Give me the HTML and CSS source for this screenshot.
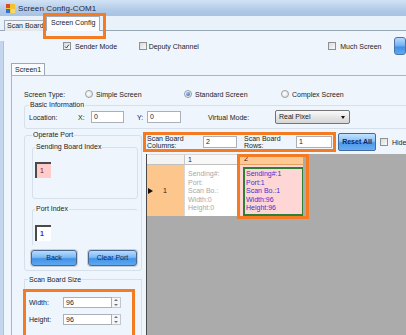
FILE: index.html
```html
<!DOCTYPE html>
<html>
<head>
<meta charset="utf-8">
<link rel="stylesheet" href="styles.css">
</head>
<body>
<div class="window">
  <div class="titlebar">
    <svg class="appicon" width="9" height="9" viewBox="0 0 9 9">
      <rect x="0" y="0" width="9" height="9" fill="#f2c230"/>
      <rect x="0" y="0" width="4" height="4" fill="#e0482c"/>
      <rect x="0" y="5" width="4" height="4" fill="#2f74d0"/>
      <rect x="5" y="5" width="4" height="4" fill="#f6d86a"/>
    </svg>
    <span class="title">Screen Config-COM1</span>
  </div>

  <div class="tabstrip">
    <div class="tab">Scan Board</div>
    <div class="tab active">Screen Config<span class="mark mark-tab"></span></div>
  </div>

  <div class="client">
    <div class="client-in">
      <div class="opts">
        <span class="chk-item w1"><span class="chk"><svg width="8" height="8" viewBox="0 0 8 8"><path d="M1.5 4 L3.2 6 L6.5 1.5" fill="none" stroke="#253f86" stroke-width="1.3"/></svg></span>Sender Mode</span>
        <span class="chk-item w2"><span class="chk"></span>Deputy Channel</span>
        <span class="chk-item w3"><span class="chk"></span>Much Screen</span>
        <span class="cutbtn"></span>
      </div>

      <div class="subtabs"><div class="subtab">Screen1</div></div>

      <div class="panel">
        <div class="stype">
          <span class="lbl l-stype">Screen Type:</span>
          <span class="radio-item r1"><span class="radio"></span>Simple Screen</span>
          <span class="radio-item r2"><span class="radio on"></span>Standard Screen</span>
          <span class="radio-item"><span class="radio"></span>Complex Screen</span>
        </div>

        <fieldset class="grp basic">
          <legend>Basic Information</legend>
          <div class="locrow">
            <span class="lbl l-loc">Location:</span>
            <span class="lbl l-x">X:</span>
            <span class="inp i-x">0</span>
            <span class="lbl l-y">Y:</span>
            <span class="inp i-y">0</span>
            <span class="lbl l-vm">Virtual Mode:</span>
            <span class="select">Real Pixel<span class="dd"></span></span>
          </div>
        </fieldset>

        <div class="lower">
          <div class="leftcol">
            <fieldset class="grp operate">
              <legend>Operate Port</legend>
              <fieldset class="grp sending">
                <legend>Sending Board Index</legend>
                <div class="idx pink">1</div>
              </fieldset>
              <fieldset class="grp port">
                <legend>Port Index</legend>
                <div class="idx white">1</div>
              </fieldset>
              <div class="btns">
                <span class="btn b-back">Back</span>
                <span class="btn b-clear">Clear Port</span>
              </div>
            </fieldset>

            <div class="sizegrp">
              <div class="sizelegend"><span>Scan Board Size</span></div>
              <div class="whbox">
                <div class="whrow">
                  <span class="lbl l-wh">Width:</span>
                  <span class="inp i-wh">96</span>
                  <span class="spin"><span class="up"></span><span class="down"></span></span>
                </div>
                <div class="whrow r-h">
                  <span class="lbl l-wh">Height:</span>
                  <span class="inp i-wh">96</span>
                  <span class="spin"><span class="up"></span><span class="down"></span></span>
                </div>
              </div>
            </div>
          </div>

          <div class="rightcol">
            <div class="colsrow">
              <div class="colsbox">
                <span class="lbl2 l-c">Scan Board<br>Columns:</span>
                <span class="inp i-c">2</span>
                <span class="lbl2 l-r">Scan Board<br>Rows:</span>
                <span class="inp i-r">1</span>
              </div>
              <span class="rbtn">Reset All</span>
              <span class="chk-item hide"><span class="chk"></span>Hide</span>
            </div>

            <div class="grid">
              <div class="ghead">
                <div class="gc corner"></div>
                <div class="gc h1">1</div>
                <div class="gc h2">2</div>
              </div>
              <div class="grow">
                <div class="gc rh"><span class="arrow"></span><span class="rnum">1</span></div>
                <div class="gc c1">Sending#:<br>Port:<br>Scan Bo.:<br>Width:0<br>Height:0</div>
                <div class="gc c2"><div class="sel">Sending#:1<br>Port:1<br>Scan Bo.:1<br>Width:96<br>Height:96</div></div>
              </div>
              <span class="mark mark-col"></span>
            </div>
          </div>
        </div>
      </div>
    </div>
  </div>
</div>
</body>
</html>
```

FILE: styles.css
```css
* { box-sizing: border-box; }
html, body { margin: 0; padding: 0; }
body { width: 406px; height: 335px; overflow: hidden; background: #eef5fc; }

.window {
  position: relative;
  width: 406px;
  height: 335px;
  overflow: hidden;
  background: #eef5fc;
  font-family: "Liberation Sans", Arial, sans-serif;
  font-size: 7px;
  line-height: 9px;
  color: #1c1c1c;
}

/* title bar */
.titlebar {
  height: 16px;
  display: flex;
  align-items: center;
  padding-left: 6px;
  gap: 3px;
  background: linear-gradient(#d3e3f5, #b2cbe8 60%, #a7c2e3);
}
.appicon { display: block; }
.title { font-size: 8px; color: #1f2b3c; letter-spacing: 0.1px; }

/* top tabs */
.tabstrip {
  height: 15px;
  display: flex;
  align-items: flex-end;
  padding-left: 4px;
  background: #e9f1fa;
  border-bottom: 1px solid #98a6b6;
}
.tab {
  position: relative;
  height: 11px;
  width: 42px;
  margin-bottom: -1px;
  padding-left: 2px;
  border: 1px solid #a3adb9;
  border-bottom: none;
  background: linear-gradient(#f6f6f6, #e3e6ea);
  font-size: 7px;
  line-height: 10px;
  white-space: nowrap;
  overflow: hidden;
}
.tab.active {
  height: 15px;
  width: 54px;
  overflow: visible;
  padding-left: 4px;
  line-height: 12px;
  background: #fbfdff;
  z-index: 2;
}

/* orange annotation marks */
.mark {
  position: absolute;
  border: 3px solid #f47b22;
  pointer-events: none;
}
.mark-tab { left: -4px; top: -4px; width: 63px; height: 26px; }

/* client area */
.client {
  height: 304px;
  border-left: 3px solid #c3d6ed;
}
.client-in {
  height: 100%;
  border-left: 1px solid #b3c2d3;
}

.opts {
  display: flex;
  align-items: center;
  height: 10px;
  margin-top: 10px;
  padding-left: 59px;
}
.chk-item { display: flex; align-items: center; white-space: nowrap; }
.chk-item.w1 { width: 77px; }
.chk-item.w2 { width: 193px; }
.chk-item.w3 { width: 67px; }
.chk {
  width: 8px;
  height: 8px;
  margin-right: 4px;
  border: 1px solid #8e9092;
  background: linear-gradient(135deg, #d9dadc, #fafafa);
  display: flex;
  align-items: center;
  justify-content: center;
}
.chk svg { display: block; width: 7px; height: 7px; }
.w1 .chk { margin-right: 4px; }
.w2 .chk { margin-right: 2px; }
.cutbtn {
  width: 12px;
  height: 18px;
  flex: none;
  border: 1px solid #4b73a8;
  border-radius: 3px;
  background: linear-gradient(#b7dafc, #6fb0f2 50%, #3f8fe6 55%, #62aaf0);
}

.subtabs { height: 12px; margin-top: 12px; padding-left: 7px; }
.subtab {
  width: 34px;
  height: 12px;
  border: 1px solid #9ea9b6;
  border-bottom: none;
  background: #f9fbfe;
  padding-left: 3px;
  line-height: 11px;
  font-size: 7px;
}

.panel {
  margin-left: 7px;
  height: 280px;
  border-left: 1px solid #a9b6c5;
  border-top: 1px solid #a9b6c5;
  padding: 12px 0 0 12px;
}

.stype { display: flex; align-items: center; height: 12px; }
.l-stype { width: 61px; }
.radio-item { display: flex; align-items: center; white-space: nowrap; }
.radio-item.r1 { width: 99px; }
.radio-item.r2 { width: 97px; }
.radio {
  width: 8px;
  height: 8px;
  border-radius: 50%;
  border: 1px solid #9b9ea2;
  background: radial-gradient(circle at 40% 40%, #ffffff, #d8dadc);
  margin-right: 4px;
  display: flex;
  align-items: center;
  justify-content: center;
}
.radio.on::after {
  content: "";
  width: 4px;
  height: 4px;
  border-radius: 50%;
  background: radial-gradient(circle at 35% 35%, #9cc6f0, #1f5aa8);
}
.radio-item .radio { margin-right: 3px; }

/* group boxes */
fieldset.grp {
  margin: 0;
  min-width: 0;
  border: 1px solid #d6e0ea;
  border-radius: 3px;
  padding: 0;
}
fieldset.grp > legend {
  padding: 0 1px;
  margin-left: 0;
  font-size: 7px;
  line-height: 10px;
  color: #1c1c1c;
}

.basic {
  width: 420px;
  margin-top: 4px;
  padding: 0 0 4px 4px !important;
}
.locrow { display: flex; align-items: center; height: 14px; }
.lbl { white-space: nowrap; }
.l-loc { width: 49px; }
.l-x { width: 13px; }
.l-y { width: 10px; margin-left: 13px; }
.l-vm { width: 67px; margin-left: 27px; }
.inp {
  display: block;
  height: 12px;
  border: 1px solid #a9b0b8;
  background: #ffffff;
  padding-left: 2px;
  line-height: 10px;
  font-size: 7px;
}
.i-x { width: 33px; }
.i-y { width: 34px; }
.select {
  position: relative;
  width: 75px;
  height: 14px;
  border: 1px solid #747474;
  border-radius: 2px;
  background: linear-gradient(#fafafa, #e4e4e4 55%, #d6d6d6);
  padding-left: 3px;
  line-height: 12px;
}
.dd {
  position: absolute;
  right: 4px;
  top: 5px;
  border-left: 2.5px solid transparent;
  border-right: 2.5px solid transparent;
  border-top: 3px solid #111;
}

/* lower area */
.lower { display: flex; margin-top: 1px; }
.leftcol { width: 118px; flex: none; }

.operate { padding: 0 3px 4px 7px !important; }
.sending { margin-top: 2px !important; padding: 0 0 20px 2px !important; }
.port { margin-top: 5px !important; padding: 0 0 4px 2px !important; border-bottom-color: transparent !important; border-right-color: transparent !important; }
.idx {
  width: 16px;
  height: 16px;
  border-top: 2px solid #4a4a4a;
  border-left: 2px solid #4a4a4a;
  padding-left: 3px;
  line-height: 13px;
  font-size: 7px;
}
.idx.pink { margin-top: 10px; background: #ffcccc; color: #7a1010; }
.idx.white { margin-top: 11px; background: #ffffff; color: #1b2fd0; font-weight: bold; }

.btns { display: flex; gap: 11px; margin-top: 4px; margin-left: -1px; }
.btn {
  height: 16px;
  border: 1px solid #4c6890;
  border-radius: 3px;
  background: linear-gradient(#b9dcfd, #7cb9f4 45%, #4393e7 55%, #5ea8f0);
  box-shadow: 0 0 0 1px #c6ced8;
  color: #0e2a62;
  text-align: center;
  line-height: 14px;
  font-size: 7px;
}
.b-back { width: 46px; }
.b-clear { width: 49px; }

/* scan board size group (open at the bottom edge) */
.sizegrp {
  margin-top: 8px;
  height: 70px;
  border-left: 1px solid #d6e0ea;
  border-right: 1px solid #d6e0ea;
  border-radius: 3px 3px 0 0;
}
.sizegrp .sizelegend {
  height: 0;
  border-top: 1px solid #d6e0ea;
  margin: 0 -1px;
  position: relative;
}
.sizelegend span {
  position: absolute;
  left: 4px;
  top: -5px;
  padding: 0 1px;
  line-height: 9px;
  background: #eef5fc;
}
.whbox {
  margin: 9px 0 0 -2px;
  width: 112px;
  height: 60px;
  border: 3px solid #f47b22;
  border-bottom: none;
  padding: 5px 0 0 3px;
}
.whrow { display: flex; align-items: center; height: 11px; }
.whrow.r-h { margin-top: 6px; }
.l-wh { width: 34px; }
.i-wh { width: 49px; height: 11px; line-height: 9px; }
.spin {
  width: 9px;
  height: 11px;
  border: 1px solid #c2c7cd;
  border-left: none;
  background: #f4f6f8;
  display: flex;
  flex-direction: column;
  align-items: center;
  justify-content: space-around;
}
.spin .up { border-left: 2px solid transparent; border-right: 2px solid transparent; border-bottom: 2px solid #6a7480; }
.spin .down { border-left: 2px solid transparent; border-right: 2px solid transparent; border-top: 2px solid #6a7480; }

/* right column */
.rightcol { width: 270px; flex: none; margin-left: 1px; }
.colsrow { display: flex; align-items: center; margin-top: 2px; height: 20px; }
.colsbox {
  display: flex;
  align-items: center;
  width: 193px;
  height: 20px;
  border: 3px solid #f47b22;
  padding-left: 1px;
}
.lbl2 { font-size: 7px; line-height: 7.5px; white-space: nowrap; }
.l-c { width: 56px; }
.l-r { width: 52px; margin-left: 7px; }
.i-c { width: 34px; }
.i-r { width: 36px; }
.rbtn {
  width: 38px;
  height: 18px;
  margin-left: 2px;
  border: 1px solid #3f6aa5;
  border-radius: 2px;
  background: linear-gradient(#c4e2ff, #88c0f6 45%, #4d98ea 55%, #6aaef2);
  color: #0e2662;
  font-weight: bold;
  text-align: center;
  line-height: 16px;
  font-size: 7px;
}
.chk-item.hide { margin-left: 4px; }

.grid {
  position: relative;
  margin-top: 2px;
  margin-left: 3px;
  width: 264px;
  height: 190px;
  background: #ababab;
  border-left: 1px solid #4a4a4a;
}
.ghead { display: flex; height: 11px; }
.grow { display: flex; height: 51px; }
.gc { flex: none; font-size: 7px; }
.corner { width: 38px; background: #f3f3f3; border-right: 1px solid #c8c8c8; border-bottom: 1px solid #c0c0c0; border-top: 1px solid #d8d8d8; }
.h1 { width: 55px; background: #f8f8f8; border-right: 1px solid #c8c8c8; border-bottom: 1px solid #c0c0c0; border-top: 1px solid #d8d8d8; padding-left: 3px; line-height: 10px; }
.h2 { width: 63px; background: #fdc994; border-bottom: 1px solid #e8a060; padding-left: 4px; line-height: 10px; }
.rh {
  width: 38px;
  background: #fdc68d;
  display: flex;
  align-items: center;
  padding-left: 1px;
  border-right: 1px solid #d8d8d8;
}
.arrow {
  width: 0;
  height: 0;
  border-top: 3.5px solid transparent;
  border-bottom: 3.5px solid transparent;
  border-left: 5px solid #111;
}
.rnum { margin-left: 10px; }
.c1 {
  width: 55px;
  background: #ffffff;
  color: #a9a9a9;
  padding: 5px 0 0 3px;
  line-height: 8.5px;
  border-right: 1px solid #d8d8d8;
}
.c2 { width: 63px; background: #ffd6d6; }
.sel {
  margin: 2px 0 0 3px;
  width: 60px;
  height: 49px;
  border: 2px solid #2f7f35;
  border-right-width: 1px;
  padding: 1px 0 0 1px;
  color: #3a33d2;
  line-height: 8.5px;
}
.mark-col { left: 90px; top: 0; width: 72px; height: 65px; }
```
